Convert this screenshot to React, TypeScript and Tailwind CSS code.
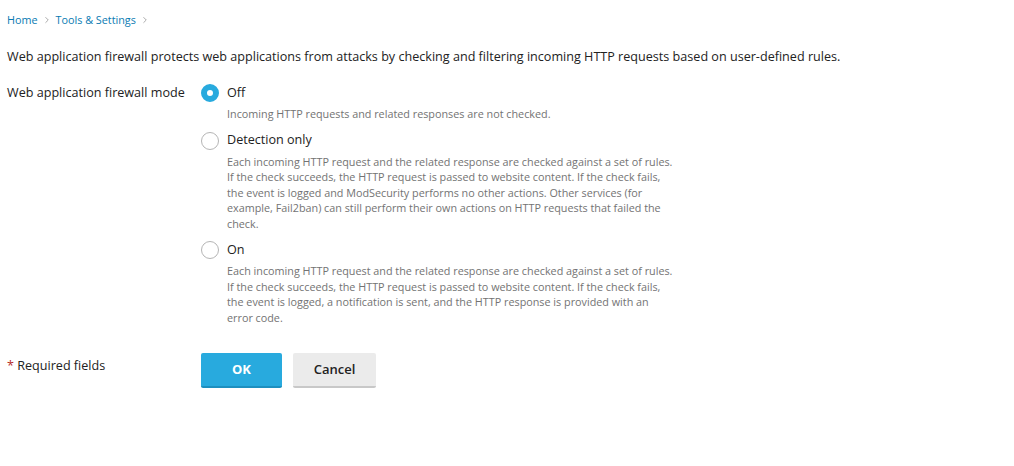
import { ChevronRight } from "lucide-react";

const options = [
  {
    id: "off",
    label: "Off",
    desc: ["Incoming HTTP requests and related responses are not checked."],
  },
  {
    id: "detection",
    label: "Detection only",
    desc: [
      "Each incoming HTTP request and the related response are checked against a set of rules.",
      "If the check succeeds, the HTTP request is passed to website content. If the check fails,",
      "the event is logged and ModSecurity performs no other actions. Other services (for",
      "example, Fail2ban) can still perform their own actions on HTTP requests that failed the",
      "check.",
    ],
  },
  {
    id: "on",
    label: "On",
    desc: [
      "Each incoming HTTP request and the related response are checked against a set of rules.",
      "If the check succeeds, the HTTP request is passed to website content. If the check fails,",
      "the event is logged, a notification is sent, and the HTTP response is provided with an",
      "error code.",
    ],
  },
];

function Radio({ checked }: { checked: boolean }) {
  return checked ? (
    <span className="w-[18px] h-[18px] rounded-full border-[6px] border-[#28aade] bg-white shrink-0" />
  ) : (
    <span className="w-[18px] h-[18px] rounded-full border border-[#b5b5b5] bg-white shrink-0" />
  );
}

export default function App() {
  const selected = "off";
  return (
    <div className="min-h-[466px] bg-white text-[#222] font-['Open_Sans',sans-serif] px-[7px] pt-[12px]">
      <nav className="flex items-center text-[10.8px] text-[#0a7bb3] h-[16px]">
        <span>Home</span>
        <ChevronRight className="w-[10px] h-[10px] mx-[4px] text-[#888]" strokeWidth={1.7} />
        <span>Tools &amp; Settings</span>
        <ChevronRight className="w-[10px] h-[10px] mx-[4px] text-[#888]" strokeWidth={1.7} />
      </nav>

      <p className="text-[12.6px] mt-[20px] leading-[18px]">
        Web application firewall protects web applications from attacks by checking and filtering incoming HTTP requests based on user-defined rules.
      </p>

      <div className="flex mt-[18px]">
        <div className="w-[194px] text-[12.6px] leading-[18px]">Web application firewall mode</div>
        <div className="flex flex-col gap-[10px]">
          {options.map((o) => (
            <div key={o.id}>
              <label className="flex items-center gap-[8px] h-[18px]">
                <Radio checked={o.id === selected} />
                <span className="text-[12.6px]">{o.label}</span>
              </label>
              <div className="pl-[26px] mt-[4px] text-[10.8px] leading-[15.5px] text-[#737373]">
                {o.desc.map((l) => (
                  <div key={l}>{l}</div>
                ))}
              </div>
            </div>
          ))}
        </div>
      </div>

      <div className="flex mt-[28px]">
        <div className="w-[194px] text-[12.6px] pt-[4px]">
          <span className="text-[#b52a2a]">*</span> Required fields
        </div>
        <div className="flex gap-[11px]">
          <button className="w-[81px] h-[35px] bg-[#28aade] border-b-2 border-[#1d8fbf] text-white text-[13px] font-bold rounded-[2px]">
            OK
          </button>
          <button className="w-[83px] h-[35px] bg-[#ebebeb] border-b-2 border-[#c8c8c8] text-[#222] text-[13px] font-semibold rounded-[2px]">
            Cancel
          </button>
        </div>
      </div>
    </div>
  );
}
